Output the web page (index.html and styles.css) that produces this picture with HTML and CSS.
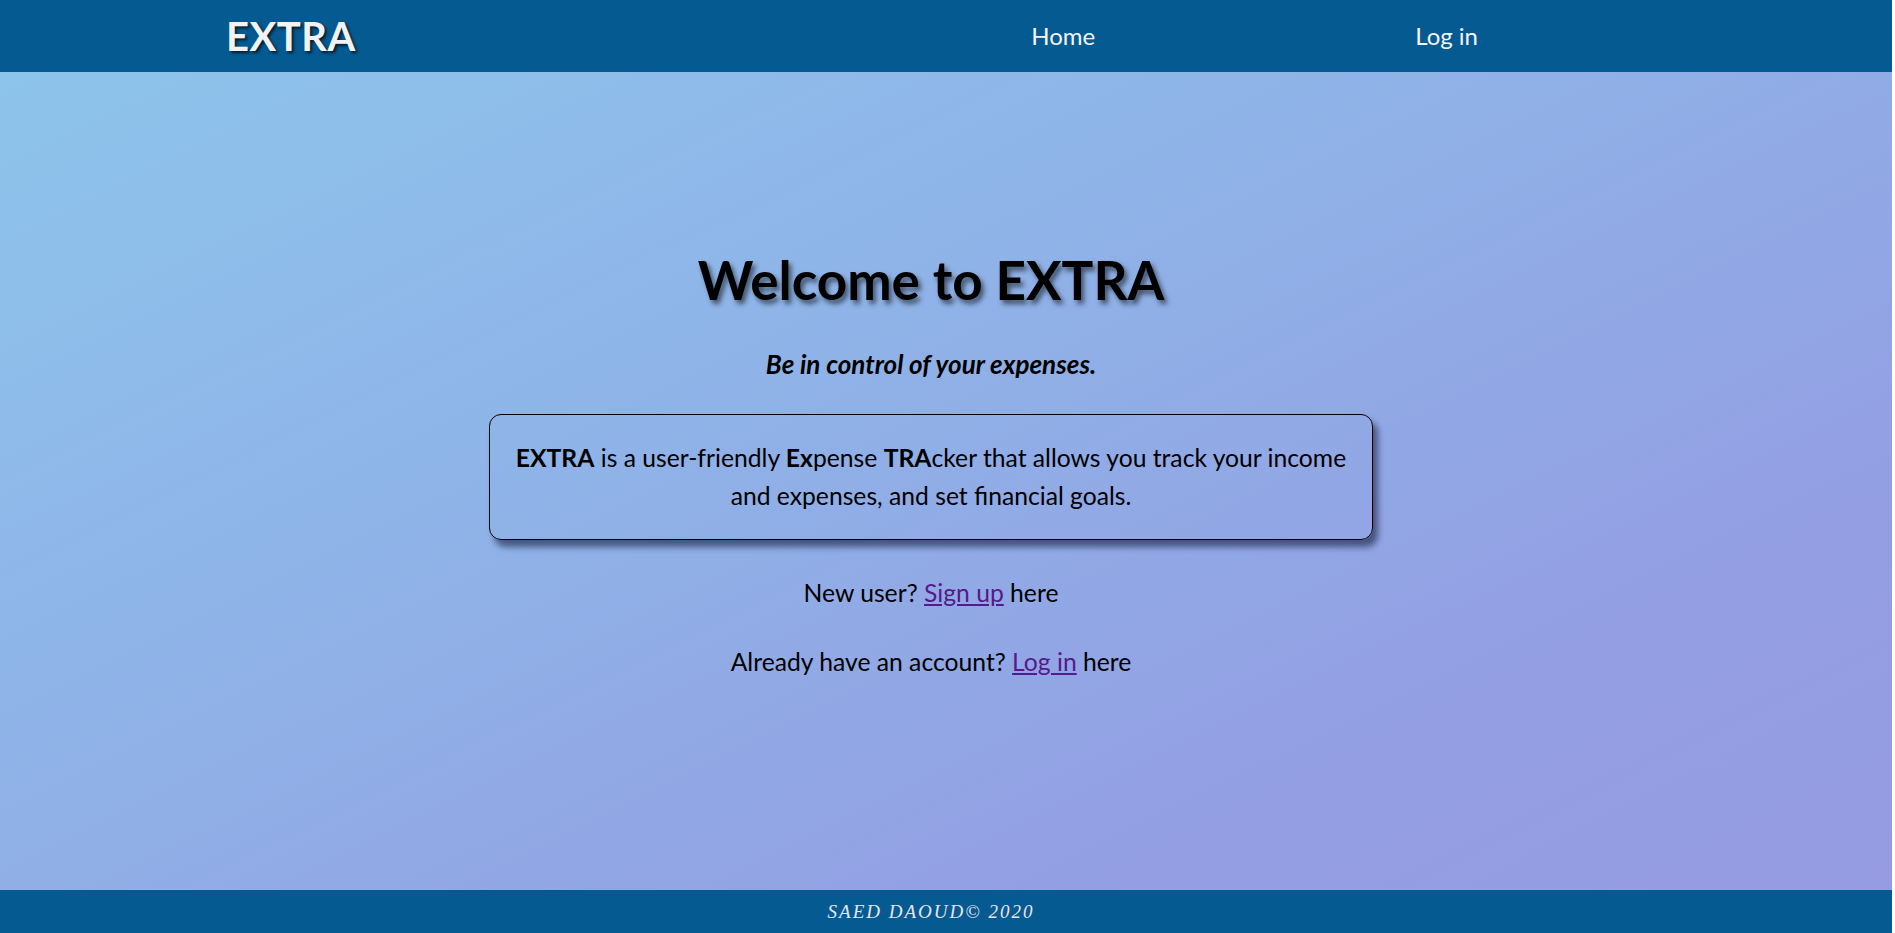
FILE: index.html
```html
<!DOCTYPE html>
<html lang="en">
<head>
<meta charset="utf-8">
<title>EXTRA</title>
<link rel="stylesheet" href="styles.css">
</head>
<body>
<div class="page">
  <header class="topbar">
    <div class="topbar-inner">
      <a class="logo" href="#">EXTRA</a>
      <nav class="nav">
        <a class="nav-link" href="#">Home</a>
        <a class="nav-link" href="#">Log in</a>
      </nav>
    </div>
  </header>
  <main class="main">
    <h1 class="title">Welcome to EXTRA</h1>
    <p class="tagline">Be in control of your expenses.</p>
    <div class="intro">
      <p><strong>EXTRA</strong> is a user-friendly <strong>Ex</strong>pense <strong>TRA</strong>cker that allows you track your income and expenses, and set financial goals.</p>
    </div>
    <p class="cta">New user? <a class="link" href="#">Sign up</a> here</p>
    <p class="cta cta-last">Already have an account? <a class="link" href="#">Log in</a> here</p>
  </main>
  <footer class="footer">
    <p class="copy">SAED DAOUD© 2020</p>
  </footer>
</div>
</body>
</html>
```

FILE: styles.css
```css
* { box-sizing: border-box; }
html, body { margin: 0; padding: 0; background: #ffffff; }
body {
  font-family: "Lato", "Open Sans", "Liberation Sans", sans-serif;
  color: #000;
}
.page {
  width: calc(100% - 3px);
  min-height: 100vh;
  display: flex;
  flex-direction: column;
  background: linear-gradient(to bottom right, #8dc6eb 0%, #8fb3e8 40%, #939fe3 75%, #979be2 100%);
}
.topbar {
  background: #055a92;
  height: 72px;
}
.topbar-inner {
  max-width: 1440px;
  height: 100%;
  margin: 0 auto;
  display: flex;
  align-items: center;
}
.logo {
  color: #f2f2f2;
  text-decoration: none;
  font-weight: 700;
  font-size: 40px;
  letter-spacing: 0.5px;
  text-shadow: 2px 2px 3px rgba(0, 0, 0, 0.7);
}
.nav {
  margin-left: auto;
  display: flex;
  gap: 320px;
  padding-right: 188px;
  padding-bottom: 2px;
}
.nav-link {
  color: #f4f4f4;
  text-decoration: none;
  font-size: 24px;
}
.main {
  flex: 1;
  display: flex;
  flex-direction: column;
  align-items: center;
  padding: 176px 30px 0 0;
}
.title {
  margin: 0;
  font-size: 53px;
  line-height: 1.2;
  font-weight: 700;
  text-shadow: 3px 4px 5px rgba(0, 0, 0, 0.55);
}
.tagline {
  margin: 37px 0 0;
  font-size: 26px;
  line-height: 1.2;
  font-weight: 700;
  font-style: italic;
}
.intro {
  margin-top: 34px;
  width: 884px;
  padding: 24px;
  border: 1px solid #000;
  border-radius: 12px;
  box-shadow: 5px 7px 6px rgba(20, 30, 60, 0.6);
  text-align: center;
  font-size: 24.7px;
  line-height: 38px;
}
.intro p { margin: 0; }
.cta {
  margin: 38px 0 0;
  font-size: 24.7px;
  line-height: 1.2;
}
.cta-last { margin-top: 40px; }
.link { color: #551a8b; }
.footer {
  background: #055a92;
  height: 43px;
  display: flex;
  align-items: center;
  justify-content: center;
  padding-right: 30px;
}
.copy {
  margin: 0;
  color: #e6e6e6;
  font-family: "Liberation Serif", "DejaVu Serif", serif;
  font-style: italic;
  font-size: 19px;
  letter-spacing: 2px;
}
```
